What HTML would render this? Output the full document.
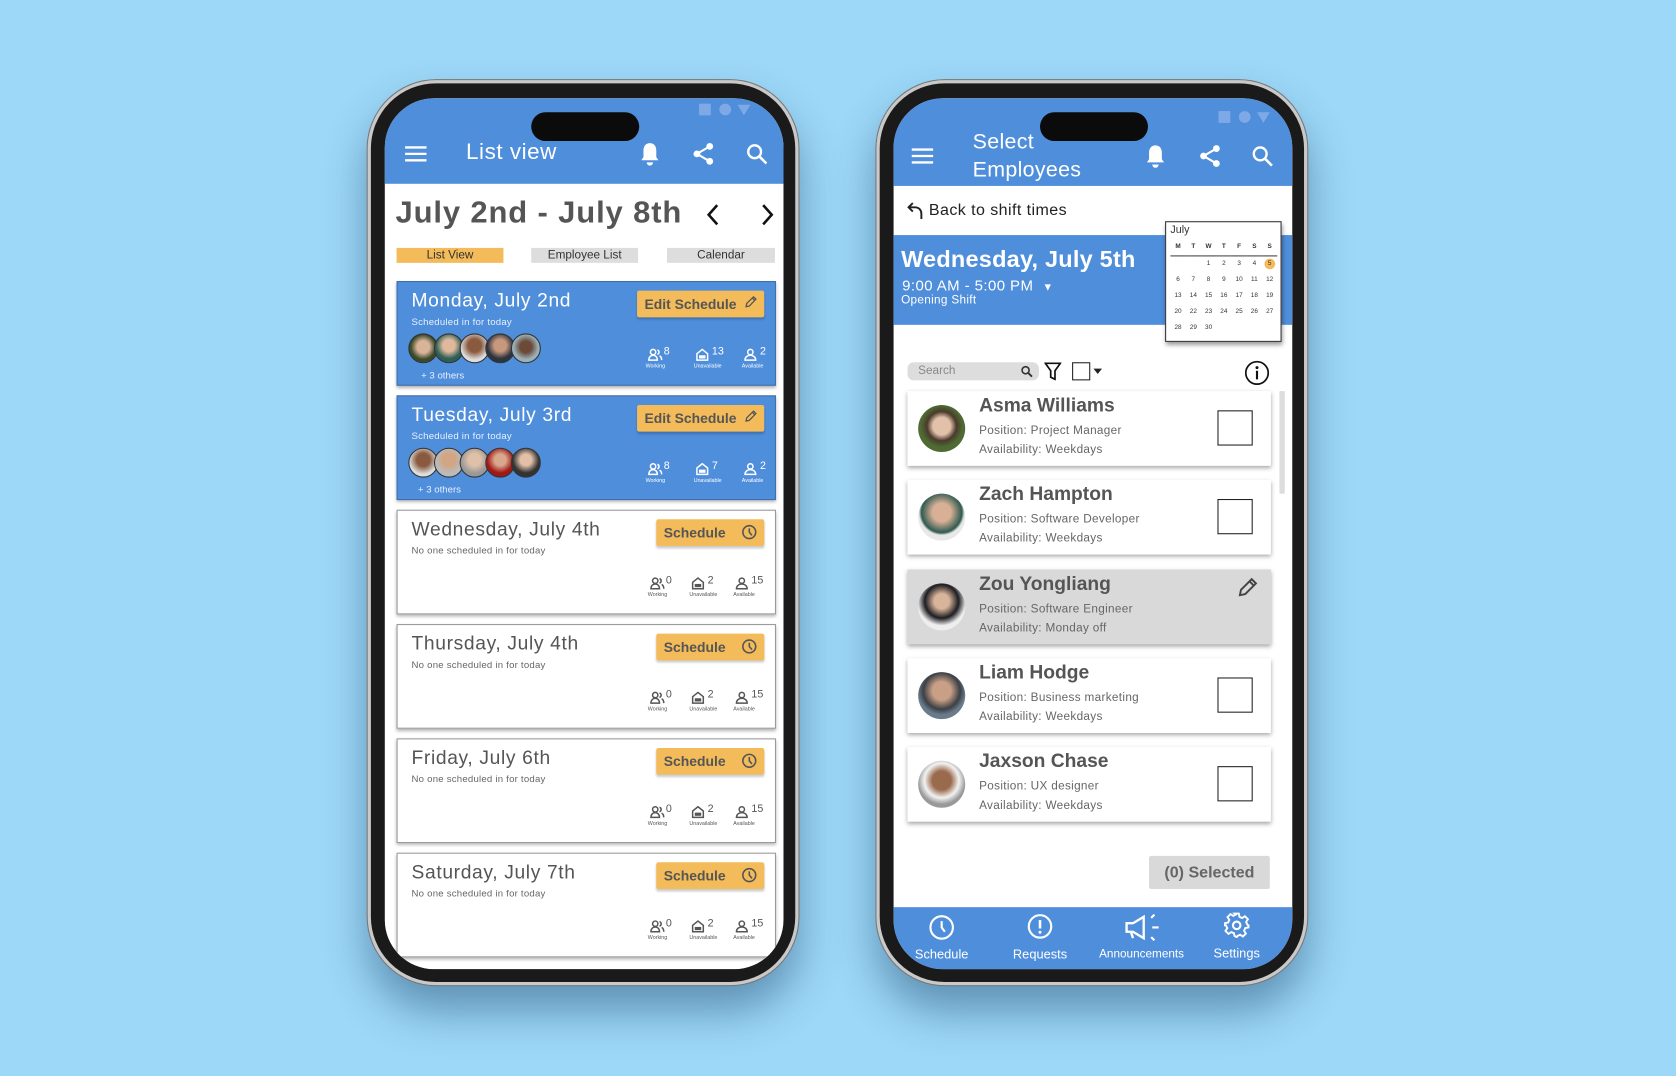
<!DOCTYPE html>
<html><head><meta charset="utf-8"><style>
*{margin:0;padding:0;box-sizing:border-box}
html,body{width:1676px;height:1076px;overflow:hidden;background:#9dd8f8}
body{font-family:"Liberation Sans",sans-serif}
#w{position:absolute;left:0;top:0;width:1568px;height:1007px;transform:scale(1.06888,1.06852);transform-origin:0 0;background:#9dd8f8}
.ab{position:absolute}
.frame{position:absolute;width:403px;height:847px;border-radius:64px;background:#1a1a1a;border:3px solid #c9c9c9;box-shadow:0 0 0 1px #777,0 24px 40px rgba(20,60,100,.45)}
.scr{position:absolute;width:373px;height:815px;border-radius:46px;overflow:hidden;background:#fff}
.hdr{position:absolute;left:0;top:0;width:373px;background:#4f8edb}
.island{position:absolute;left:137px;top:13px;width:101px;height:27px;border-radius:14px;background:#0b0b0b}
.card{position:absolute;left:11px;width:355px;height:98px;border:1.5px solid #9a9a9a;background:#fff;box-shadow:0 2px 3px rgba(0,0,0,.3)}
.card.b{background:#4f8edb;border-color:#3f6fae}
.ct{position:absolute;left:13px;top:7px;font-size:18px;color:#555;letter-spacing:.6px}
.b .ct{color:#fff}
.cs{position:absolute;left:13px;top:32px;font-size:9px;color:#666;letter-spacing:.2px}
.b .cs{color:#e7f0ff}
.btn{position:absolute;top:8px;right:10px;height:25px;background:#f3bb59;border-radius:2px;font-weight:bold;font-size:13px;color:#555;line-height:25px;padding-left:7px;box-shadow:0 2px 2px rgba(0,0,0,.2)}
.btn svg{position:absolute;right:7px;top:5px}
.st{position:absolute;top:60px;font-size:10px;color:#555;padding-left:15px}
.b .st{color:#fff}
.st svg{position:absolute;left:0;top:2px}
.st small{position:absolute;left:-2px;top:16px;font-size:5px;white-space:nowrap}
.av{position:absolute;top:48px;width:28px;height:28px;border-radius:50%;border:1px solid #333}
.ec{position:absolute;left:13px;width:340px;height:70px;background:#fff;box-shadow:0 2px 4px rgba(0,0,0,.35)}
.ec .ph{position:absolute;left:10px;top:13px;width:44px;height:44px;border-radius:50%}
.ec .n{position:absolute;left:67px;top:3px;font-size:18px;font-weight:bold;color:#555}
.ec .p{position:absolute;left:67px;top:28px;font-size:11px;color:#666;line-height:18px;letter-spacing:.3px}
.ec .cb{position:absolute;left:290px;top:18px;width:33px;height:33px;border:1.5px solid #222}
.cal{position:absolute;left:254px;top:115px;width:109px;height:113px;background:#fff;border:1.5px solid #333;box-shadow:1px 3px 4px rgba(0,0,0,.4);font-size:6px;color:#333}
.cal table{position:absolute;left:4px;top:16px;border-collapse:collapse;width:100px}
.cal td{text-align:center;height:15px;width:14px}
.nav{position:absolute;top:757px;left:0;width:373px;height:58px;background:#4f8edb}
.nav div{position:absolute;top:37px;font-size:12px;color:#fff;transform:translateX(-50%);white-space:nowrap}
</style></head><body><div id="w">
<svg width="0" height="0" style="position:absolute"><defs>
<symbol id="pp" viewBox="0 0 14 12"><circle cx="5" cy="3.5" r="2.5" fill="none" stroke="currentColor" stroke-width="1.4"/><path d="M1 11c0-3 2-4.5 4-4.5s4 1.5 4 4.5z" fill="none" stroke="currentColor" stroke-width="1.4"/><path d="M9 1.5a2.2 2.2 0 0 1 0 4.2M11 7c1.5.7 2 2 2 4" fill="none" stroke="currentColor" stroke-width="1.4"/></symbol>
<symbol id="hs" viewBox="0 0 12 12"><path d="M1 11V5l5-4 5 4v6z" fill="none" stroke="currentColor" stroke-width="1.4"/><rect x="3" y="6.5" width="6" height="3" fill="currentColor"/></symbol>
<symbol id="p1" viewBox="0 0 12 12"><circle cx="6" cy="3.5" r="2.5" fill="none" stroke="currentColor" stroke-width="1.4"/><path d="M1 11c0-3 2.5-4.5 5-4.5s5 1.5 5 4.5z" fill="none" stroke="currentColor" stroke-width="1.4"/></symbol>
<symbol id="ck" viewBox="0 0 14 14"><circle cx="7" cy="7" r="6" fill="none" stroke="currentColor" stroke-width="1.5"/><path d="M7 3.5V7l2.5 3" fill="none" stroke="currentColor" stroke-width="1.5"/></symbol>
<symbol id="pn" viewBox="0 0 12 12"><path d="M2 10l.6-3L9 .8 11.2 3 5 9.4z M8 2l2 2" fill="none" stroke="currentColor" stroke-width="1.2"/></symbol>
</defs></svg>

<!-- LEFT PHONE -->
<div class="frame" style="left:344px;top:75px"></div>
<div class="scr" style="left:360px;top:92px">
 <div class="hdr" style="height:80px"></div>
 <div class="island"></div>
 <div class="ab" style="left:294px;top:5px;width:11px;height:11px;background:#7fa9e6"></div>
 <div class="ab" style="left:313px;top:5px;width:11px;height:11px;border-radius:50%;background:#7fa9e6"></div>
 <div class="ab" style="left:330px;top:6px;width:0;height:0;border-left:6px solid transparent;border-right:6px solid transparent;border-top:10px solid #7fa9e6"></div>
 <svg class="ab" style="left:18px;top:44px" width="22" height="16"><path d="M1 2h20M1 8h20M1 14h20" stroke="#fff" stroke-width="2.2"/></svg>
 <div class="ab" style="left:76px;top:39px;font-size:21px;color:#fff;letter-spacing:.5px">List view</div>
 <svg class="ab" style="left:237px;top:40px" width="22" height="24" viewBox="0 0 22 24"><path d="M11 2c-4 0-6 3-6 7v6l-2 3h16l-2-3V9c0-4-2-7-6-7z M8 20a3 3 0 0 0 6 0z" fill="#fff"/></svg>
 <svg class="ab" style="left:287px;top:41px" width="22" height="22" viewBox="0 0 22 22"><circle cx="17" cy="4" r="3.2" fill="#fff"/><circle cx="5" cy="11" r="3.2" fill="#fff"/><circle cx="17" cy="18" r="3.2" fill="#fff"/><path d="M17 4L5 11l12 7" stroke="#fff" stroke-width="2" fill="none"/></svg>
 <svg class="ab" style="left:338px;top:42px" width="20" height="20" viewBox="0 0 20 20"><circle cx="8" cy="8" r="6" stroke="#fff" stroke-width="2.2" fill="none"/><path d="M12.5 12.5L19 19" stroke="#fff" stroke-width="2.4"/></svg>
 <div class="ab" style="left:10px;top:91px;font-size:29px;font-weight:bold;color:#555;letter-spacing:.8px">July 2nd - July 8th</div>
 <svg class="ab" style="left:300px;top:98px" width="14" height="22"><path d="M11 2L3 11l8 9" stroke="#111" stroke-width="2.4" fill="none"/></svg>
 <svg class="ab" style="left:351px;top:98px" width="14" height="22"><path d="M3 2l8 9-8 9" stroke="#111" stroke-width="2.4" fill="none"/></svg>
 <div class="ab" style="left:11px;top:140px;width:100px;height:14px;background:#f3bb59;font-size:11px;text-align:center;line-height:14px;color:#333">List View</div>
 <div class="ab" style="left:137px;top:140px;width:100px;height:14px;background:#ddd;font-size:11px;text-align:center;line-height:14px;color:#333">Employee List</div>
 <div class="ab" style="left:264px;top:140px;width:101px;height:14px;background:#ddd;font-size:11px;text-align:center;line-height:14px;color:#333">Calendar</div>

 <div class="card b" style="top:171px"><div class="ct">Monday, July 2nd</div><div class="cs">Scheduled in for today</div><div class="btn" style="width:119px">Edit Schedule<svg width="12" height="12" style="color:#555"><use href="#pn"/></svg></div>
  <div class="av" style="left:10px;background:radial-gradient(circle at 50% 45%,#d9b39a 30%,#3b4a2a 60%)"></div><div class="av" style="left:34px;background:radial-gradient(circle at 50% 40%,#e0b89c 28%,#2e5f55 60%)"></div><div class="av" style="left:58px;background:radial-gradient(circle at 50% 40%,#8a5a3e 30%,#ddd 65%)"></div><div class="av" style="left:82px;background:radial-gradient(circle at 50% 40%,#c7987c 28%,#2d3440 60%)"></div><div class="av" style="left:106px;background:radial-gradient(circle at 50% 45%,#6b4a38 28%,#9bb0b8 60%)"></div>
  <div class="ab" style="left:22px;top:82px;font-size:9px;color:#e8f0ff">+ 3 others</div>
  <div class="st" style="left:234px"><svg width="14" height="12"><use href="#pp"/></svg>8<small>Working</small></div><div class="st" style="left:279px"><svg width="12" height="12"><use href="#hs"/></svg>13<small>Unavailable</small></div><div class="st" style="left:324px"><svg width="12" height="12"><use href="#p1"/></svg>2<small>Available</small></div></div>
 <div class="card b" style="top:278px"><div class="ct">Tuesday, July 3rd</div><div class="cs">Scheduled in for today</div><div class="btn" style="width:119px">Edit Schedule<svg width="12" height="12" style="color:#555"><use href="#pn"/></svg></div>
  <div class="av" style="left:10px;background:radial-gradient(circle at 50% 40%,#8a5a3e 30%,#ddd 65%)"></div><div class="av" style="left:34px;background:radial-gradient(circle at 50% 40%,#d2a584 28%,#bbb 62%)"></div><div class="av" style="left:58px;background:radial-gradient(circle at 50% 40%,#e0c0a8 28%,#999 62%)"></div><div class="av" style="left:82px;background:radial-gradient(circle at 50% 40%,#d9a88c 26%,#a01818 60%)"></div><div class="av" style="left:106px;background:radial-gradient(circle at 50% 40%,#e2c0a8 26%,#333 60%)"></div>
  <div class="ab" style="left:19px;top:82px;font-size:9px;color:#e8f0ff">+ 3 others</div>
  <div class="st" style="left:234px"><svg width="14" height="12"><use href="#pp"/></svg>8<small>Working</small></div><div class="st" style="left:279px"><svg width="12" height="12"><use href="#hs"/></svg>7<small>Unavailable</small></div><div class="st" style="left:324px"><svg width="12" height="12"><use href="#p1"/></svg>2<small>Available</small></div></div>

 <div class="card" style="top:385px"><div class="ct">Wednesday, July 4th</div><div class="cs">No one scheduled in for today</div><div class="btn" style="width:101px">Schedule<svg width="14" height="14" style="color:#555"><use href="#ck"/></svg></div>
  <div class="st" style="left:236px"><svg width="14" height="12"><use href="#pp"/></svg>0<small>Working</small></div><div class="st" style="left:275px"><svg width="12" height="12"><use href="#hs"/></svg>2<small>Unavailable</small></div><div class="st" style="left:316px"><svg width="12" height="12"><use href="#p1"/></svg>15<small>Available</small></div></div>
 <div class="card" style="top:492px"><div class="ct">Thursday, July 4th</div><div class="cs">No one scheduled in for today</div><div class="btn" style="width:101px">Schedule<svg width="14" height="14" style="color:#555"><use href="#ck"/></svg></div>
  <div class="st" style="left:236px"><svg width="14" height="12"><use href="#pp"/></svg>0<small>Working</small></div><div class="st" style="left:275px"><svg width="12" height="12"><use href="#hs"/></svg>2<small>Unavailable</small></div><div class="st" style="left:316px"><svg width="12" height="12"><use href="#p1"/></svg>15<small>Available</small></div></div>
 <div class="card" style="top:599px"><div class="ct">Friday, July 6th</div><div class="cs">No one scheduled in for today</div><div class="btn" style="width:101px">Schedule<svg width="14" height="14" style="color:#555"><use href="#ck"/></svg></div>
  <div class="st" style="left:236px"><svg width="14" height="12"><use href="#pp"/></svg>0<small>Working</small></div><div class="st" style="left:275px"><svg width="12" height="12"><use href="#hs"/></svg>2<small>Unavailable</small></div><div class="st" style="left:316px"><svg width="12" height="12"><use href="#p1"/></svg>15<small>Available</small></div></div>
 <div class="card" style="top:706px"><div class="ct">Saturday, July 7th</div><div class="cs">No one scheduled in for today</div><div class="btn" style="width:101px">Schedule<svg width="14" height="14" style="color:#555"><use href="#ck"/></svg></div>
  <div class="st" style="left:236px"><svg width="14" height="12"><use href="#pp"/></svg>0<small>Working</small></div><div class="st" style="left:275px"><svg width="12" height="12"><use href="#hs"/></svg>2<small>Unavailable</small></div><div class="st" style="left:316px"><svg width="12" height="12"><use href="#p1"/></svg>15<small>Available</small></div></div>
</div>

<!-- RIGHT PHONE -->
<div class="frame" style="left:820px;top:75px"></div>
<div class="scr" style="left:836px;top:92px">
 <div class="hdr" style="height:82px"></div>
 <div class="island"></div>
 <div class="ab" style="left:304px;top:12px;width:11px;height:11px;background:#7fa9e6"></div>
 <div class="ab" style="left:323px;top:12px;width:11px;height:11px;border-radius:50%;background:#7fa9e6"></div>
 <div class="ab" style="left:340px;top:13px;width:0;height:0;border-left:6px solid transparent;border-right:6px solid transparent;border-top:10px solid #7fa9e6"></div>
 <svg class="ab" style="left:16px;top:46px" width="22" height="16"><path d="M1 2h20M1 8h20M1 14h20" stroke="#fff" stroke-width="2.2"/></svg>
 <div class="ab" style="left:74px;top:28px;font-size:20px;color:#fff;line-height:26px;letter-spacing:.3px">Select<br>Employees</div>
 <svg class="ab" style="left:234px;top:42px" width="22" height="24" viewBox="0 0 22 24"><path d="M11 2c-4 0-6 3-6 7v6l-2 3h16l-2-3V9c0-4-2-7-6-7z M8 20a3 3 0 0 0 6 0z" fill="#fff"/></svg>
 <svg class="ab" style="left:285px;top:43px" width="22" height="22" viewBox="0 0 22 22"><circle cx="17" cy="4" r="3.2" fill="#fff"/><circle cx="5" cy="11" r="3.2" fill="#fff"/><circle cx="17" cy="18" r="3.2" fill="#fff"/><path d="M17 4L5 11l12 7" stroke="#fff" stroke-width="2" fill="none"/></svg>
 <svg class="ab" style="left:335px;top:44px" width="20" height="20" viewBox="0 0 20 20"><circle cx="8" cy="8" r="6" stroke="#fff" stroke-width="2.2" fill="none"/><path d="M12.5 12.5L19 19" stroke="#fff" stroke-width="2.4"/></svg>
 <svg class="ab" style="left:12px;top:96px" width="16" height="18"><path d="M6 2L2 6l4 4M2 6h6c4 0 6 3 6 6v5" stroke="#222" stroke-width="1.8" fill="none"/></svg>
 <div class="ab" style="left:33px;top:96px;font-size:15px;color:#222;letter-spacing:.4px">Back to shift times</div>
 <div class="ab" style="left:0;top:128px;width:373px;height:84px;background:#4f8edb"></div>
 <div class="ab" style="left:7px;top:138px;font-size:22px;font-weight:bold;color:#fff;letter-spacing:.2px">Wednesday, July 5th</div>
 <div class="ab" style="left:8px;top:167px;font-size:14px;color:#fff;letter-spacing:.4px">9:00 AM - 5:00 PM &nbsp;<span style="font-size:10px">▼</span></div>
 <div class="ab" style="left:7px;top:183px;font-size:11px;color:#fff;letter-spacing:.3px">Opening Shift</div>
 <div class="cal"><div class="ab" style="left:4px;top:2px;font-size:10px">July</div>
  <table><tr style="font-weight:bold;border-bottom:1px solid #444"><td style="height:10px">M</td><td>T</td><td>W</td><td>T</td><td>F</td><td>S</td><td>S</td></tr>
  <tr><td></td><td></td><td>1</td><td>2</td><td>3</td><td>4</td><td><span style="display:inline-block;width:10px;height:10px;border-radius:50%;background:#f3bb59;line-height:10px">5</span></td></tr>
  <tr><td>6</td><td>7</td><td>8</td><td>9</td><td>10</td><td>11</td><td>12</td></tr>
  <tr><td>13</td><td>14</td><td>15</td><td>16</td><td>17</td><td>18</td><td>19</td></tr>
  <tr><td>20</td><td>22</td><td>23</td><td>24</td><td>25</td><td>26</td><td>27</td></tr>
  <tr><td>28</td><td>29</td><td>30</td><td></td><td></td><td></td><td></td></tr></table></div>
 <div class="ab" style="left:13px;top:247px;width:123px;height:17px;border-radius:6px;background:#ddd;font-size:11px;color:#888;padding-left:10px;line-height:17px">Search<svg style="position:absolute;right:6px;top:3px" width="11" height="11"><circle cx="4.5" cy="4.5" r="3.3" stroke="#333" stroke-width="1.5" fill="none"/><path d="M7 7l3.5 3.5" stroke="#333" stroke-width="1.8"/></svg></div>
 <svg class="ab" style="left:141px;top:247px" width="16" height="17"><path d="M1 1h14l-5 7v8l-4-2V8z" stroke="#111" stroke-width="1.6" fill="none"/></svg>
 <div class="ab" style="left:167px;top:247px;width:17px;height:17px;border:1.5px solid #222"></div>
 <div class="ab" style="left:187px;top:253px;border-left:4px solid transparent;border-right:4px solid transparent;border-top:5px solid #222"></div>
 <svg class="ab" style="left:328px;top:245px" width="24" height="24"><circle cx="12" cy="12" r="10.5" stroke="#111" stroke-width="1.6" fill="none"/><circle cx="12" cy="7" r="1.4" fill="#111"/><path d="M12 10v8" stroke="#111" stroke-width="2"/></svg>
 <div class="ab" style="left:361px;top:274px;width:5px;height:96px;background:#ddd"></div>

 <div class="ec" style="top:274px"><div class="ph" style="background:radial-gradient(circle at 50% 45%,#e2c0aa 25%,#4a3a2c 42%,#4f6a33 60%)"></div><div class="n">Asma Williams</div><div class="p">Position: Project Manager<br>Availability: Weekdays</div><div class="cb"></div></div>
 <div class="ec" style="top:357px"><div class="ph" style="background:radial-gradient(circle at 50% 40%,#d8b096 25%,#2f5a50 55%,#e8e8e8 62%)"></div><div class="n">Zach Hampton</div><div class="p">Position: Software Developer<br>Availability: Weekdays</div><div class="cb"></div></div>
 <div class="ec" style="top:441px;background:#d9d9d9"><div class="ph" style="background:radial-gradient(circle at 50% 38%,#d8b49a 20%,#1d1d22 45%,#eee 65%)"></div><div class="n">Zou Yongliang</div><div class="p">Position: Software Engineer<br>Availability: Monday off</div>
  <svg class="ab" style="left:308px;top:7px" width="20" height="20"><path d="M3 17l1-5L14 2l4 4L8 16z M12 4l4 4" stroke="#444" stroke-width="1.8" fill="none"/></svg></div>
 <div class="ec" style="top:524px"><div class="ph" style="background:radial-gradient(circle at 50% 40%,#c99f86 25%,#3c4045 50%,#6a7c8c 65%)"></div><div class="n">Liam Hodge</div><div class="p">Position: Business marketing<br>Availability: Weekdays</div><div class="cb"></div></div>
 <div class="ec" style="top:607px"><div class="ph" style="background:radial-gradient(circle at 50% 42%,#9a6a4c 26%,#f2f2f2 48%,#999 66%)"></div><div class="n">Jaxson Chase</div><div class="p">Position: UX designer<br>Availability: Weekdays</div><div class="cb"></div></div>

 <div class="ab" style="left:239px;top:709px;width:113px;height:31px;background:#d9d9d9;border-radius:2px;font-size:15px;font-weight:bold;color:#666;text-align:center;line-height:31px">(0) Selected</div>
 <div class="nav">
  <svg class="ab" style="left:33px;top:7px" width="24" height="24"><circle cx="12" cy="12" r="10.5" stroke="#fff" stroke-width="2" fill="none"/><path d="M12 6v6l3 4" stroke="#fff" stroke-width="2" fill="none"/></svg>
  <svg class="ab" style="left:125px;top:6px" width="24" height="24"><circle cx="12" cy="12" r="10.5" stroke="#fff" stroke-width="2" fill="none"/><path d="M12 6v8" stroke="#fff" stroke-width="2.4"/><circle cx="12" cy="17.5" r="1.4" fill="#fff"/></svg>
  <svg class="ab" style="left:216px;top:6px" width="36" height="26"><path d="M2 9h6l10-6v20L8 17H2z M6 17l2 6" stroke="#fff" stroke-width="2.2" fill="none"/><path d="M25 4l3-3M26 13h6M25 22l3 3" stroke="#fff" stroke-width="2"/></svg>
  <svg class="ab" style="left:309px;top:5px" width="24" height="24" viewBox="0 0 24 24"><circle cx="12" cy="12" r="3.5" stroke="#fff" stroke-width="2" fill="none"/><path d="M10 1h4l.6 3 2.5 1.2 2.6-1.7 2.8 2.8-1.7 2.6L22 11.4l1 .6v0l-.1 0v0 0L23 14l-3 .6-1.1 2.5 1.7 2.6-2.8 2.8-2.6-1.7L12.7 22 12 23h0l-2-1-.6-2.6-2.5-1.1-2.6 1.7-2.8-2.8 1.7-2.6L2 12.1 1 12v-2l3-.6 1.1-2.5-1.7-2.6 2.8-2.8 2.6 1.7L11 2z" stroke="#fff" stroke-width="1.8" fill="none"/></svg>
  <div style="left:45px">Schedule</div><div style="left:137px">Requests</div><div style="left:232px;font-size:11px;top:38px">Announcements</div><div style="left:321px;top:36px">Settings</div>
 </div>
</div>

</div></body></html>
